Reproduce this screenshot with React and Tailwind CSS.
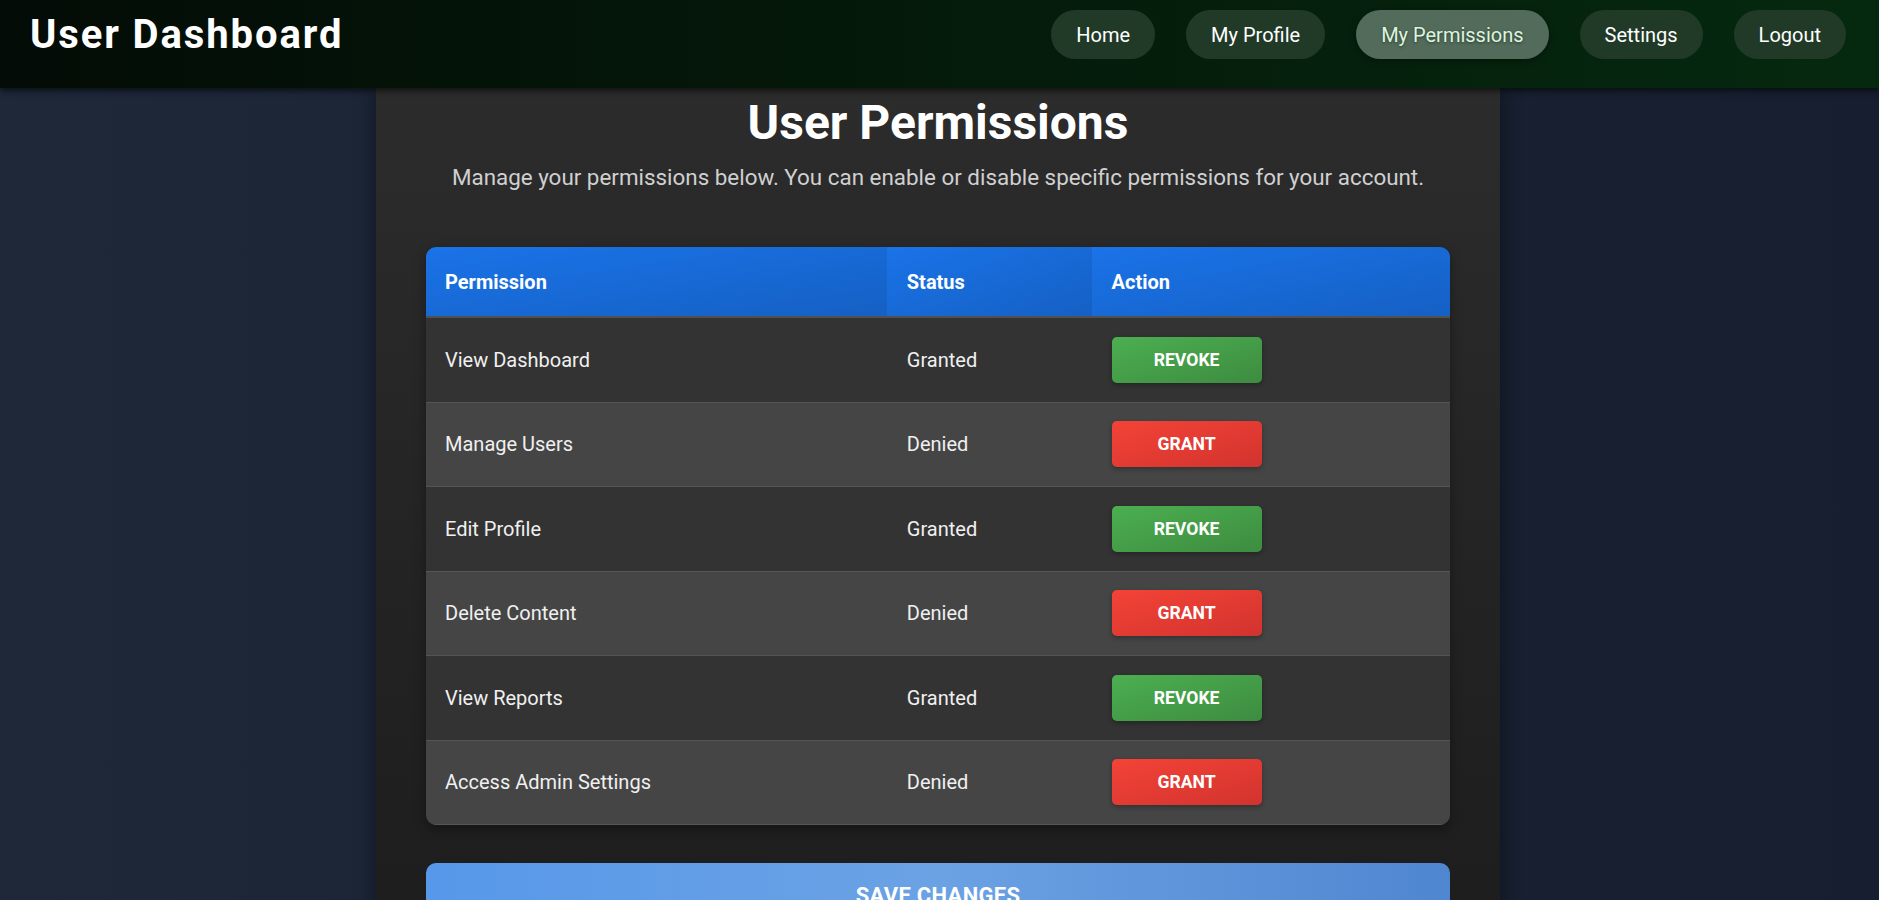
import React from "react";

const rows = [
  { name: "View Dashboard", status: "Granted" },
  { name: "Manage Users", status: "Denied" },
  { name: "Edit Profile", status: "Granted" },
  { name: "Delete Content", status: "Denied" },
  { name: "View Reports", status: "Granted" },
  { name: "Access Admin Settings", status: "Denied" },
];

const nav = ["Home", "My Profile", "My Permissions", "Settings", "Logout"];

export default function App() {
  return (
    <div className="min-h-[900px] font-['Roboto',sans-serif] bg-gradient-to-r from-[#1e2839] to-[#161e2f] overflow-hidden">
      <header className="relative z-10 h-[88px] px-[30px] pt-[10px] flex items-start justify-between bg-gradient-to-r from-[#030c06] to-[#05290f] shadow-[0_3px_6px_rgba(0,0,0,0.6)]">
        <div className="h-[49px] flex items-center">
          <h1 className="text-[40px] leading-[48px] font-bold text-white tracking-[1.9px]">User Dashboard</h1>
        </div>
        <nav className="h-[49px] flex items-center gap-[31px] pr-[3px]">
          {nav.map((n) => (
            <a
              key={n}
              className={
                n === "My Permissions"
                  ? "h-[49px] px-[25px] flex items-center rounded-full bg-[#536b5a] text-[#dcf5df] text-[20px] leading-[24px] [text-shadow:0_1px_3px_rgba(0,0,0,0.45)] shadow-[0_2px_6px_rgba(0,0,0,0.35)]"
                  : "h-[49px] px-[25px] flex items-center rounded-full bg-[#213a28] text-white text-[20px] leading-[24px]"
              }
            >
              {n}
            </a>
          ))}
        </nav>
      </header>

      <main className="w-[1124px] ml-[376px] px-[50px] pt-[7px] pb-[60px] bg-gradient-to-b from-[#2c2c2c] to-[#1c1c1c] shadow-[0_0_20px_rgba(0,0,0,0.45)] min-h-[812px]">
        <h2 className="text-center text-white font-bold text-[48px] leading-[56px]">User Permissions</h2>
        <p className="mt-[13px] text-center text-[#d0d0d0] text-[22.4px] leading-[27px]">
          Manage your permissions below. You can enable or disable specific permissions for your account.
        </p>

        <div className="mt-[56px] rounded-[10px] overflow-hidden shadow-[0_4px_12px_rgba(0,0,0,0.35)]">
          <div className="flex h-[71px] border-b-2 border-[#505050] text-white font-bold text-[20px]">
            <div className="w-[45%] px-[19px] flex items-center bg-gradient-to-br from-[#1a73e8] to-[#1560c4]">Permission</div>
            <div className="w-[20%] px-[20px] flex items-center bg-gradient-to-br from-[#1a73e8] to-[#1560c4]">Status</div>
            <div className="w-[35%] px-[20px] flex items-center bg-gradient-to-br from-[#1a73e8] to-[#1560c4]">Action</div>
          </div>
          {rows.map((r, i) => (
            <div
              key={r.name}
              className={
                (i % 2 === 0 ? "bg-[#333333]" : "bg-[#454545]") +
                " flex h-[84.5px] border-b border-[#555555] text-[#f0f0f0] text-[20px]"
              }
            >
              <div className="w-[45%] px-[19px] flex items-center">{r.name}</div>
              <div className="w-[20%] px-[20px] flex items-center">{r.status}</div>
              <div className="w-[35%] px-[20px] flex items-center">
                {r.status === "Granted" ? (
                  <button className="w-[150px] h-[46px] rounded-[5px] bg-gradient-to-br from-[#4caf50] to-[#3d8c40] text-white font-bold text-[17.6px] shadow-[0_2px_5px_rgba(0,0,0,0.3)]">
                    REVOKE
                  </button>
                ) : (
                  <button className="w-[150px] h-[46px] rounded-[5px] bg-gradient-to-br from-[#f44336] to-[#d2332f] text-white font-bold text-[17.6px] shadow-[0_2px_5px_rgba(0,0,0,0.3)]">
                    GRANT
                  </button>
                )}
              </div>
            </div>
          ))}
        </div>

        <button className="mt-[38px] w-full pt-[20px] pb-[20px] rounded-[10px] bg-gradient-to-r from-[#5798ea] via-[#6ba2e4] to-[#4f86d0] text-white font-bold text-[22px] leading-[26px] tracking-[0.3px]">
          SAVE CHANGES
        </button>
      </main>
    </div>
  );
}
